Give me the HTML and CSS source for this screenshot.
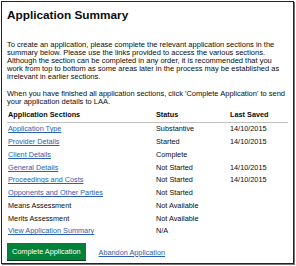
FILE: index.html
```html
<!DOCTYPE html>
<html lang="en">
<head>
  <meta charset="UTF-8">
  <title>Application Summary</title>
  <link rel="stylesheet" href="styles.css">
</head>
<body>
  <div class="panel">
    <h1>Application Summary</h1>
    <p class="intro">To create an application, please complete the relevant application sections in the summary below. Please use the links provided to access the various sections. Although the section can be completed in any order, it is recommended that you work from top to bottom as some areas later in the process may be established as irrelevant in earlier sections.</p>
    <p class="intro last">When you have finished all application sections, click 'Complete Application' to send your application details to LAA.</p>
    <table class="sections">
      <thead>
        <tr>
          <th>Application Sections</th>
          <th>Status</th>
          <th>Last Saved</th>
        </tr>
      </thead>
      <tbody>
        <tr><td><a href="#">Application Type</a></td><td>Substantive</td><td>14/10/2015</td></tr>
        <tr><td><a href="#">Provider Details</a></td><td>Started</td><td>14/10/2015</td></tr>
        <tr><td><a href="#">Client Details</a></td><td>Complete</td><td></td></tr>
        <tr><td><a href="#">General Details</a></td><td>Not Started</td><td>14/10/2015</td></tr>
        <tr><td><a href="#">Proceedings and Costs</a></td><td>Not Started</td><td>14/10/2015</td></tr>
        <tr><td><a href="#">Opponents and Other Parties</a></td><td>Not Started</td><td></td></tr>
        <tr><td>Means Assessment</td><td>Not Available</td><td></td></tr>
        <tr><td>Merits Assessment</td><td>Not Available</td><td></td></tr>
        <tr><td><a href="#">View Application Summary</a></td><td>N/A</td><td></td></tr>
      </tbody>
    </table>
    <div class="actions">
      <a href="#" class="button">Complete Application</a>
      <a href="#" class="link">Abandon Application</a>
    </div>
  </div>
</body>
</html>
```

FILE: styles.css
```css
body {
  font-family: "Liberation Sans", Arial, sans-serif;
  margin: 0;
  padding: 1px;
  color: #0b0c0c;
  background: #fff;
}
.panel {
  width: 293px;
  height: 263px;
  box-sizing: border-box;
  border: 1px solid #222;
  box-shadow: 1px 1px 0 #777;
  padding: 5px 5px 0 5px;
  overflow: hidden;
}
h1 {
  font-size: 11.8px;
  line-height: 14px;
  font-weight: bold;
  margin: 1px 0 0 0;
}
.intro {
  font-size: 7.5px;
  line-height: 8px;
  margin: 0 0 9px 0;
}
.intro:first-of-type {
  margin-top: 19px;
}
.intro.last {
  margin-bottom: 5px;
}
.sections {
  width: 100%;
  border-collapse: collapse;
  font-size: 7.3px;
  line-height: 8px;
}
th {
  text-align: left;
  font-weight: bold;
  padding: 0 1px 3px 1px;
  border-bottom: 1px solid #bfc1c3;
}
td {
  padding: 0 1px;
  height: 12.75px;
}
th:nth-child(1), td:nth-child(1) {
  width: 146px;
}
th:nth-child(2), td:nth-child(2) {
  width: 72px;
}
a {
  color: #2b5fb0;
}
.actions {
  display: flex;
  align-items: center;
  gap: 13px;
  margin-top: 5px;
  font-size: 7.3px;
}
.button {
  display: inline-block;
  background-color: #00823b;
  color: #fff;
  text-decoration: none;
  padding: 5px 5px 4px 5px;
  line-height: 8px;
  box-shadow: 0 1px 0 #003618;
}
.link {
  padding-top: 2px;
}
```
